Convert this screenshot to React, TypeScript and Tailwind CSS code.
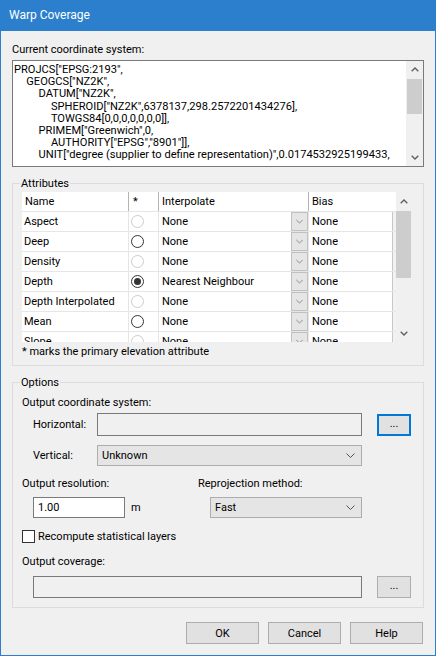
import React from 'react'

type RadioState = 'disabled' | 'off' | 'on'

const wktLines: { indent: number; text: string }[] = [
  { indent: 0, text: 'PROJCS["EPSG:2193",' },
  { indent: 1, text: 'GEOGCS["NZ2K",' },
  { indent: 2, text: 'DATUM["NZ2K",' },
  { indent: 3, text: 'SPHEROID["NZ2K",6378137,298.2572201434276],' },
  { indent: 3, text: 'TOWGS84[0,0,0,0,0,0,0]],' },
  { indent: 2, text: 'PRIMEM["Greenwich",0,' },
  { indent: 3, text: 'AUTHORITY["EPSG","8901"]],' },
  { indent: 2, text: 'UNIT["degree (supplier to define representation)",0.0174532925199433,' },
]

const attributes: { name: string; radio: RadioState; interp: string }[] = [
  { name: 'Aspect', radio: 'disabled', interp: 'None' },
  { name: 'Deep', radio: 'off', interp: 'None' },
  { name: 'Density', radio: 'disabled', interp: 'None' },
  { name: 'Depth', radio: 'on', interp: 'Nearest Neighbour' },
  { name: 'Depth Interpolated', radio: 'disabled', interp: 'None' },
  { name: 'Mean', radio: 'off', interp: 'None' },
  { name: 'Slope', radio: 'disabled', interp: 'None' },
]

function Chevron({ up = false, className = '' }: { up?: boolean; className?: string }) {
  return (
    <svg width="9" height="5" viewBox="0 0 9 5" className={className}>
      <path
        d={up ? 'M0.5 4.5L4.5 0.5L8.5 4.5' : 'M0.5 0.5L4.5 4.5L8.5 0.5'}
        fill="none"
        stroke="currentColor"
        strokeWidth="1"
      />
    </svg>
  )
}

function ScrollArrow({ up = false }: { up?: boolean }) {
  return (
    <svg width="8" height="5" viewBox="0 0 8 5" className="text-[#606060]">
      <path
        d={up ? 'M0.7 4.3L4 1L7.3 4.3' : 'M0.7 0.7L4 4L7.3 0.7'}
        fill="none"
        stroke="currentColor"
        strokeWidth="1.4"
      />
    </svg>
  )
}

function Radio({ state }: { state: RadioState }) {
  const ring = state === 'disabled' ? 'border-[#cccccc]' : 'border-[#333333]'
  return (
    <span className={`w-[13px] h-[13px] rounded-full border bg-white flex items-center justify-center ${ring}`}>
      {state === 'on' && <span className="w-[7px] h-[7px] rounded-full bg-[#333333]" />}
    </span>
  )
}

function ComboBox({ value, className = '' }: { value: string; className?: string }) {
  return (
    <div
      className={`h-[21px] shrink-0 bg-[#e5e5e5] border border-[#adadad] flex items-center justify-between pl-[4px] pr-[6px] ${className}`}
    >
      <span>{value}</span>
      <Chevron className="text-[#555555]" />
    </div>
  )
}

function BrowseButton({ focused = false }: { focused?: boolean }) {
  return (
    <div
      className={`w-[34px] h-[22px] shrink-0 bg-[#e1e1e1] flex items-center justify-center pb-[3px] ${
        focused ? 'border-2 border-[#0078d7]' : 'border border-[#adadad]'
      }`}
    >
      ...
    </div>
  )
}

function Button({ label }: { label: string }) {
  return (
    <div className="w-[73px] h-[22px] bg-[#e1e1e1] border border-[#adadad] flex items-center justify-center">
      {label}
    </div>
  )
}

export default function App() {
  return (
    <div className="w-[436px] h-[656px] flex flex-col font-['Roboto',sans-serif] text-[11px] leading-[15px] text-black">
      {/* Title bar */}
      <div className="h-[31px] shrink-0 bg-[#2b7fcd] text-white text-[12px] flex items-center pl-[9px]">
        Warp Coverage
      </div>

      <div className="flex-1 flex flex-col bg-[#f0f0f0] border-x border-b border-[#2b7fcd] px-[11px]">
        <div className="mt-[11px]">Current coordinate system:</div>

        {/* WKT text box */}
        <div className="mt-[3px] h-[107px] flex bg-white border border-[#7a7a7a] overflow-hidden">
          <div className="flex-1 pt-[3px] pl-[1px] overflow-hidden whitespace-nowrap text-[11.1px] leading-[12.2px]">
            {wktLines.map((line, i) => (
              <div key={i} style={{ paddingLeft: line.indent * 12.3 }}>
                {line.text}
              </div>
            ))}
          </div>
          <div className="w-[17px] shrink-0 bg-[#f0f0f0] flex flex-col items-center">
            <div className="h-[17px] flex items-center justify-center">
              <ScrollArrow up />
            </div>
            <div className="mt-[1px] w-[15px] h-[35px] bg-[#cdcdcd]" />
            <div className="flex-1" />
            <div className="h-[17px] flex items-center justify-center">
              <ScrollArrow />
            </div>
          </div>
        </div>

        {/* Attributes group */}
        <fieldset className="mt-[9px] border border-[#dcdcdc] px-[9px] pb-[6px]">
          <legend className="ml-[-2px] px-[1px]">Attributes</legend>
          <div className="mt-[1px] h-[150px] flex overflow-hidden">
            <div className="w-[374px] shrink-0 flex flex-col bg-white">
              <div className="h-[19px] shrink-0 flex bg-white">
                <div className="w-[107px] border-r border-[#b4b4b4] pl-[3px] flex items-center">Name</div>
                <div className="w-[30px] border-r border-[#b4b4b4] pl-[4px] flex items-center">*</div>
                <div className="w-[150px] border-r border-[#b4b4b4] pl-[3px] flex items-center">Interpolate</div>
                <div className="w-[87px] pl-[3px] flex items-center">Bias</div>
              </div>
              {attributes.map((a) => (
                <div key={a.name} className="h-[20px] shrink-0 flex border-t border-[#e6e6e6]">
                  <div className="w-[107px] shrink-0 border-r border-[#e6e6e6] pl-[2px] flex items-center whitespace-nowrap">
                    {a.name}
                  </div>
                  <div className="w-[30px] shrink-0 border-r border-[#e6e6e6] pl-[2px] flex items-center">
                    <Radio state={a.radio} />
                  </div>
                  <div className="w-[150px] shrink-0 border-r border-[#e6e6e6] pl-[3px] flex items-center justify-between">
                    <span>{a.interp}</span>
                    <span className="w-[17px] h-[19px] bg-[#e5e5e5] border border-[#c0c0c0] flex items-center justify-center">
                      <Chevron className="text-[#777777] w-[7px]" />
                    </span>
                  </div>
                  <div className="w-[87px] shrink-0 pl-[3px] flex items-center justify-between">
                    <span>None</span>
                    <span className="w-[4px] h-[19px] border-l border-[#c8c8c8] bg-[#f2f2f2]" />
                  </div>
                </div>
              ))}
            </div>
            <div className="w-[15px] shrink-0 bg-[#f0f0f0] flex flex-col items-center">
              <div className="h-[19px] flex items-center justify-center">
                <ScrollArrow up />
              </div>
              <div className="w-[15px] h-[67px] bg-[#cdcdcd]" />
              <div className="flex-1" />
              <div className="h-[17px] flex items-center justify-center">
                <ScrollArrow />
              </div>
            </div>
          </div>
          <div className="mt-[2px]">* marks the primary elevation attribute</div>
        </fieldset>

        {/* Options group */}
        <fieldset className="mt-[9px] border border-[#dcdcdc] px-[9px] pb-[9px]">
          <legend className="ml-[-2px] px-[1px]">Options</legend>
          <div className="mt-[5px]">Output coordinate system:</div>
          <div className="mt-[3px] h-[23px] flex items-center">
            <span className="w-[75px] shrink-0 pl-[11px]">Horizontal:</span>
            <div className="w-[265px] shrink-0 h-[23px] bg-[#f0f0f0] border border-[#7a7a7a]" />
            <div className="ml-[15px]">
              <BrowseButton focused />
            </div>
          </div>
          <div className="mt-[9px] h-[21px] flex items-center">
            <span className="w-[75px] shrink-0 pl-[11px]">Vertical:</span>
            <ComboBox value="Unknown" className="w-[265px]" />
          </div>
          <div className="mt-[10px] flex">
            <span className="w-[176px] shrink-0">Output resolution:</span>
            <span>Reprojection method:</span>
          </div>
          <div className="mt-[6px] h-[21px] flex items-center">
            <div className="ml-[11px] w-[92px] shrink-0 h-[21px] bg-white border border-[#7a7a7a] flex items-center pl-[4px]">
              1.00
            </div>
            <span className="ml-[6px] w-[79px] shrink-0">m</span>
            <ComboBox value="Fast" className="w-[152px]" />
          </div>
          <div className="mt-[11px] h-[15px] flex items-center">
            <span className="w-[13px] h-[13px] shrink-0 border border-[#333333] bg-white" />
            <span className="ml-[3px]">Recompute statistical layers</span>
          </div>
          <div className="mt-[10px]">Output coverage:</div>
          <div className="mt-[7px] h-[22px] flex items-center">
            <div className="ml-[11px] w-[329px] shrink-0 h-[22px] bg-[#f0f0f0] border border-[#7a7a7a]" />
            <div className="ml-[15px]">
              <BrowseButton />
            </div>
          </div>
        </fieldset>

        {/* Dialog buttons */}
        <div className="mt-[14px] flex justify-end gap-[9px] pr-[1px]">
          <Button label="OK" />
          <Button label="Cancel" />
          <Button label="Help" />
        </div>
      </div>
    </div>
  )
}
